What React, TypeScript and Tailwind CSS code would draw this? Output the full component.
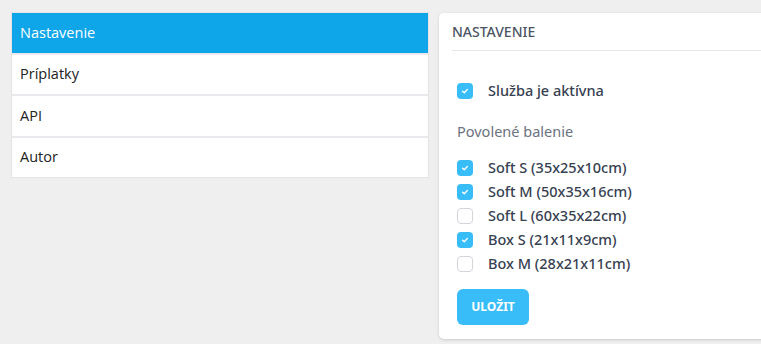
import React from "react";

const font = { fontFamily: '"Open Sans", "Noto Sans", Arial, sans-serif' };
const cardFont = { fontFamily: '"Noto Sans", "Open Sans", Arial, sans-serif' };

function Box({ checked }: { checked: boolean }) {
  return checked ? (
    <span className="flex h-[16px] w-[16px] shrink-0 items-center justify-center rounded-[4px] bg-[#38bdf8]">
      <svg width="10" height="10" viewBox="0 0 10 10" fill="none">
        <path d="M2.6 5.2 L4.3 6.8 L7.4 3.4" stroke="white" strokeWidth="1.4" strokeLinecap="round" strokeLinejoin="round" />
      </svg>
    </span>
  ) : (
    <span className="h-[16px] w-[16px] shrink-0 rounded-[4px] border border-[#d1d5db] bg-white" />
  );
}

export default function App() {
  const items = [
    { t: "Soft S (35x25x10cm)", c: true },
    { t: "Soft M (50x35x16cm)", c: true },
    { t: "Soft L (60x35x22cm)", c: false },
    { t: "Box S (21x11x9cm)", c: true },
    { t: "Box M (28x21x11cm)", c: false },
  ];
  const nav = ["Nastavenie", "Príplatky", "API", "Autor"];
  return (
    <div style={font} className="flex h-[344px] w-[761px] items-start gap-[10px] overflow-hidden bg-[#efefef] pl-[11px] pt-[12px]">
      <div className="w-[418px] shrink-0 border border-[#e4e4e7] bg-[#e9e9ee]">
        {nav.map((n, i) => (
          <div
            key={n}
            className={
              "flex h-[39.5px] items-center px-[8px] text-[14.5px] " +
              (i === 0 ? "bg-[#0ea5e9] text-white" : "bg-white text-[#222]") +
              (i < nav.length - 1 ? " mb-[2px]" : "")
            }
          >
            {n}
          </div>
        ))}
      </div>
      <div style={cardFont} className="mt-[1px] w-[340px] shrink-0 rounded-[5px] bg-white pb-[14px] shadow-[0_1px_3px_rgba(0,0,0,0.15)]">
        <div className="px-[13px]">
          <div className="flex h-[38px] items-center border-b border-[#e5e7eb] text-[14px] font-medium text-[#4b5563]">
            NASTAVENIE
          </div>
        </div>
        <div className="px-[18px]">
          <div className="mt-[29px] flex items-center gap-[15px] text-[14.5px] leading-[21px] font-medium text-[#374151]">
            <Box checked />
            <span>Služba je aktívna</span>
          </div>
          <div className="mt-[20px] text-[14.5px] leading-[21px] font-normal text-[#6b7280]">Povolené balenie</div>
          <div className="mt-[14px] flex flex-col">
            {items.map((it) => (
              <div key={it.t} className="flex h-[24px] items-center gap-[15px] text-[14.5px] font-medium text-[#374151]">
                <Box checked={it.c} />
                <span>{it.t}</span>
              </div>
            ))}
          </div>
          <button className="mt-[13px] flex h-[36px] w-[72px] items-center justify-center rounded-[6px] bg-[#38bdf8] text-[12px] font-bold text-white">
            ULOŽIT
          </button>
        </div>
      </div>
    </div>
  );
}
